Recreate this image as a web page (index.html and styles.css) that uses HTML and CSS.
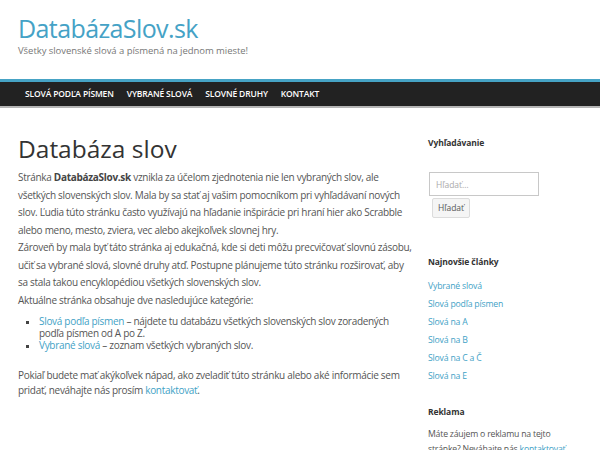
FILE: index.html
```html
<!DOCTYPE html>
<html lang="sk">
<head>
<meta charset="utf-8">
<title>DatabázaSlov.sk</title>
<link rel="stylesheet" href="styles.css">
</head>
<body>
<header class="site-header">
  <div class="branding">
    <h1 class="site-title">DatabázaSlov.sk</h1>
    <p class="site-desc">Všetky slovenské slová a písmená na jednom mieste!</p>
  </div>
  <nav class="main-nav">
    <ul class="menu">
      <li><a href="#">Slová podľa písmen</a></li>
      <li><a href="#">Vybrané slová</a></li>
      <li><a href="#">Slovné druhy</a></li>
      <li><a href="#">Kontakt</a></li>
    </ul>
  </nav>
</header>
<div class="page">
  <main class="content">
    <h2 class="entry-title">Databáza slov</h2>
    <p>Stránka <strong>DatabázaSlov.sk</strong> vznikla za účelom zjednotenia nie len vybraných slov, ale všetkých slovenských slov. Mala by sa stať aj vašim pomocníkom pri vyhľadávaní nových slov. Ľudia túto stránku často využívajú na hľadanie inšpirácie pri hraní hier ako Scrabble alebo meno, mesto, zviera, vec alebo akejkoľvek slovnej hry.</p>
    <p>Zároveň by mala byť táto stránka aj edukačná, kde si deti môžu precvičovať slovnú zásobu, učiť sa vybrané slová, slovné druhy atď. Postupne plánujeme túto stránku rozširovať, aby sa stala takou encyklopédiou všetkých slovenských slov.</p>
    <p>Aktuálne stránka obsahuje dve nasledujúce kategórie:</p>
    <ul class="cats">
      <li><a href="#">Slová podľa písmen</a> – nájdete tu databázu všetkých slovenských slov zoradených podľa písmen od A po Z.</li>
      <li><a href="#">Vybrané slová</a> – zoznam všetkých vybraných slov.</li>
    </ul>
    <p class="last">Pokiaľ budete mať akýkoľvek nápad, ako zveladiť túto stránku alebo aké informácie sem pridať, neváhajte nás prosím <a href="#">kontaktovať</a>.</p>
  </main>
  <aside class="sidebar">
    <section class="widget widget-search">
      <h3 class="widget-title">Vyhľadávanie</h3>
      <form class="search">
        <input class="search-field" type="text" placeholder="Hľadať…">
        <button class="search-btn" type="button">Hľadať</button>
      </form>
    </section>
    <section class="widget">
      <h3 class="widget-title">Najnovšie články</h3>
      <ul class="recent">
        <li><a href="#">Vybrané slová</a></li>
        <li><a href="#">Slová podľa písmen</a></li>
        <li><a href="#">Slová na A</a></li>
        <li><a href="#">Slová na B</a></li>
        <li><a href="#">Slová na C a Č</a></li>
        <li><a href="#">Slová na E</a></li>
      </ul>
    </section>
    <section class="widget">
      <h3 class="widget-title">Reklama</h3>
      <p class="ad">Máte záujem o reklamu na tejto stránke? Neváhajte nás <a href="#">kontaktovať</a>.</p>
    </section>
  </aside>
</div>
</body>
</html>
```

FILE: styles.css
```css
* { box-sizing: border-box; }
html, body { margin: 0; padding: 0; }
body {
  font-family: "Open Sans", "Noto Sans", sans-serif;
  background: #fff;
  color: #555;
  font-size: 10px;
  letter-spacing: -0.3px;
  line-height: 17.5px;
  width: 600px;
  height: 450px;
  overflow: hidden;
}
a { color: #3fa2c6; text-decoration: none; }

.branding { padding: 10px 18px 0 18px; height: 79px; }
.site-title {
  margin: 0;
  font-size: 25px;
  font-weight: 400;
  letter-spacing: -0.6px;
  line-height: 36px;
  color: #45a2c6;
}
.site-desc {
  margin: -2px 0 0 0;
  font-size: 9.5px;
  letter-spacing: -0.05px;
  line-height: 14px;
  color: #777;
}
.main-nav {
  background: #222;
  border-top: 3px solid #46a3c5;
  border-bottom: 2px solid #b5b5b5;
}
.menu {
  list-style: none;
  margin: 0;
  padding: 0 0 0 25px;
  display: flex;
  gap: 13px;
  height: 24px;
  align-items: center;
}
.menu a {
  color: #fff;
  font-size: 8.5px;
  font-weight: 600;
  letter-spacing: -0.15px;
  text-transform: uppercase;
}

.page {
  display: flex;
  padding: 0 18px;
  gap: 13px;
}
.content { width: 397px; flex: none; padding-top: 26px; }
.entry-title {
  margin: 0 0 5px 0;
  font-size: 24.5px;
  font-weight: 400;
  letter-spacing: 0;
  line-height: 30px;
  color: #333;
}
.content p { margin: 0; }
.content strong { color: #444; font-weight: 700; }
.cats {
  list-style: square;
  margin: 5.5px 0 0 0;
  padding: 0 12px 0 21px;
  line-height: 12px;
}
.cats li::marker { color: #444; font-size: 9px; }
.content p.last { margin-top: 17px; line-height: 15px; }

.sidebar { width: 154px; flex: none; padding-top: 28px; }
.widget { margin-bottom: 20px; }
.widget-search { margin-bottom: 37px; }
.widget-title {
  margin: 0 0 8px 0;
  font-size: 8.5px;
  font-weight: 700;
  letter-spacing: -0.1px;
  line-height: 14px;
  color: #333;
}
.search { display: flex; flex-direction: column; align-items: flex-start; padding-top: 14px; }
.search-field {
  width: 110px;
  height: 24px;
  border: 1px solid #c8c8c8;
  font: inherit;
  font-size: 8.5px;
  padding: 0 6px;
  margin-left: 1px;
  color: #999;
}
.search-field::placeholder { color: #aaa; }
.search-btn {
  margin: 2px 0 0 4px;
  height: 20px;
  padding: 0 5px;
  font: inherit;
  font-size: 8.5px;
  color: #555;
  background: #f5f5f5;
  border: 1px solid #dcdcdc;
  border-radius: 2px;
}
.recent { list-style: none; margin: 0; padding: 0; font-size: 8.7px; letter-spacing: -0.2px; line-height: 18px; }
.ad { margin: 0; font-size: 8.7px; letter-spacing: -0.2px; line-height: 15px; }
```
